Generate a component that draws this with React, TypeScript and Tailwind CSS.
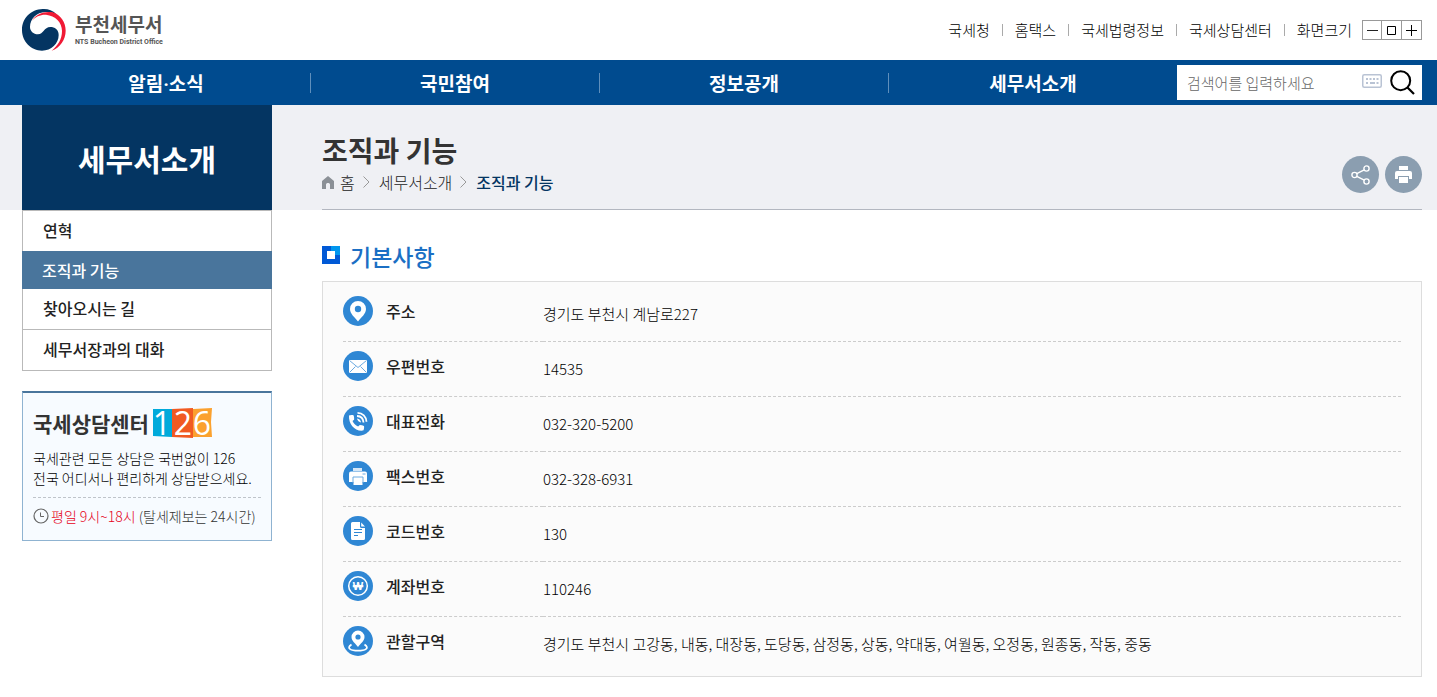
import type { ReactNode } from "react";

const utilLinks = ["국세청", "홈택스", "국세법령정보", "국세상담센터"];
const navItems = ["알림·소식", "국민참여", "정보공개", "세무서소개"];
const sideItems = ["연혁", "조직과 기능", "찾아오시는 길", "세무서장과의 대화"];
const current = "조직과 기능";

type InfoRow = {
  label: string;
  value: string;
  icon: ReactNode;
};

const infoRows: InfoRow[] = [
  { label: "주소", value: "경기도 부천시 계남로227", icon: <PinIcon /> },
  { label: "우편번호", value: "14535", icon: <MailIcon /> },
  { label: "대표전화", value: "032-320-5200", icon: <PhoneIcon /> },
  { label: "팩스번호", value: "032-328-6931", icon: <FaxIcon /> },
  { label: "코드번호", value: "130", icon: <DocIcon /> },
  { label: "계좌번호", value: "110246", icon: <WonIcon /> },
  {
    label: "관할구역",
    value: "경기도 부천시 고강동, 내동, 대장동, 도당동, 삼정동, 상동, 약대동, 여월동, 오정동, 원종동, 작동, 중동",
    icon: <AreaIcon />,
  },
];

export default function App() {
  return (
    <div className="min-h-screen bg-white font-['Noto_Sans_CJK_KR',sans-serif] text-[#222]">
      <Header />
      <MainNav />
      <div className="flex items-start gap-[50px] bg-[linear-gradient(#eff0f4_105px,transparent_105px)] pr-[15px] pb-5 pl-[22px]">
        <Sidebar />
        <main className="min-w-0 flex-1">
          <PageTitle />
          <BasicInfo />
        </main>
      </div>
    </div>
  );
}

function Header() {
  return (
    <header className="flex h-[60px] items-center justify-between pr-[15px] pl-[22px]">
      <a href="#" className="flex items-center gap-[9px]">
        <TaegeukLogo />
        <span className="flex flex-col gap-1 text-[#555]">
          <span className="text-[19px] leading-5 font-bold">부천세무서</span>
          <span className="font-[Roboto,sans-serif] text-[7px] leading-2 font-bold">NTS Bucheon District Office</span>
        </span>
      </a>
      <div className="flex items-center text-[15px] leading-5 font-light text-black">
        {utilLinks.map((link) => (
          <div key={link} className="flex items-center">
            <a href="#">{link}</a>
            <span className="mx-3 h-3 w-px bg-[#aaa]" />
          </div>
        ))}
        <span>화면크기</span>
        <div className="ml-[10px] flex divide-x divide-[#999] border border-[#999]">
          <button type="button" aria-label="축소" className="flex h-[18px] w-[19px] items-center justify-center">
            <svg width="11" height="11" viewBox="0 0 11 11" stroke="#222">
              <path d="M0 5.5h11" />
            </svg>
          </button>
          <button type="button" aria-label="기본 크기" className="flex h-[18px] w-5 items-center justify-center">
            <svg width="9" height="9" viewBox="0 0 9 9" stroke="#000" fill="none">
              <path d="M0.5 0.5h8v8h-8z" />
            </svg>
          </button>
          <button type="button" aria-label="확대" className="flex h-[18px] w-[19px] items-center justify-center">
            <svg width="11" height="11" viewBox="0 0 11 11" stroke="#000">
              <path d="M0 5.5h11M5.5 0v11" />
            </svg>
          </button>
        </div>
      </div>
    </header>
  );
}

function MainNav() {
  return (
    <div className="flex h-[45px] items-center bg-[#004b8f] pr-[15px] pl-[22px]">
      <nav className="flex flex-1 divide-x divide-[#5f8fbc]">
        {navItems.map((item) => (
          <a
            key={item}
            href="#"
            className="flex-1 pt-1 text-center font-[Roboto,'Noto_Sans_CJK_KR',sans-serif] text-[19px] leading-4 font-bold text-white"
          >
            {item}
          </a>
        ))}
      </nav>
      <form className="flex h-[35px] w-[245px] items-center bg-white pr-[7px] pl-[10px]">
        <input
          type="text"
          aria-label="검색어"
          placeholder="검색어를 입력하세요"
          className="min-w-0 flex-1 text-[15px] leading-5 font-light outline-none placeholder:text-[#666]"
        />
        <button type="button" aria-label="가상 키보드" className="mr-2 mb-1">
          <svg width="20" height="14" viewBox="0 0 20 14" fill="none">
            <rect x="0.75" y="0.75" width="18.5" height="12.5" rx="1.5" stroke="#b9c3d4" strokeWidth="1.5" />
            <path
              d="M4 5h2M7.500 5h2M11 5h2M14.500 5h2M4 9h2M8 9h5M14.500 9h2"
              stroke="#b9c3d4"
              strokeWidth="2"
            />
          </svg>
        </button>
        <button type="button" aria-label="검색">
          <svg width="25" height="25" viewBox="0 0 25 25" fill="none" stroke="#000" strokeWidth="2">
            <circle cx="10.7" cy="10.7" r="9.5" />
            <path d="M17.5 17.5l6.5 6.5" strokeWidth="2.2" />
          </svg>
        </button>
      </form>
    </div>
  );
}

function Sidebar() {
  return (
    <aside className="w-[250px] shrink-0">
      <h2 className="flex h-[105px] items-center justify-center bg-[#043562] text-[30px] leading-10 font-bold text-white">
        세무서소개
      </h2>
      <ul className="text-base leading-5 font-medium">
        {sideItems.map((item) =>
          item === current ? (
            <li key={item}>
              <a href="#" aria-current="page" className="flex h-[38px] items-center bg-[#49759c] px-5 text-white">
                {item}
              </a>
            </li>
          ) : (
            <li
              key={item}
              className="border-x border-t border-[#b9b9b9] last:border-b [li:has([aria-current])+&]:border-t-0"
            >
              <a href="#" className="flex h-10 items-center px-5 pb-[2px]">
                {item}
              </a>
            </li>
          ),
        )}
      </ul>
      <CallCenter />
    </aside>
  );
}

function CallCenter() {
  return (
    <section className="mt-5 border border-t-2 border-[#8fb3d1] border-t-[#49759c] bg-[#f7fbff] px-[10px] pt-[14px] pb-[14px]">
      <h3 className="flex items-center gap-1 text-[21px] leading-8 font-bold text-[#333]">
        국세상담센터
        <svg width="60" height="50" viewBox="0 -10 60 50" className="-my-[10px] font-['Open_Sans',sans-serif]">
          <path d="M0 1l19 0v28l-19-1z" fill="#00aadb" />
          <path d="M19 1l21 -1v30l-21-1z" fill="#f15a22" />
          <path d="M40 1l19-1-1 14 1 15h-19z" fill="#fba12f" />
          <g fill="#fff" fontSize="32" fontWeight="400" textAnchor="middle">
            <text x="9" y="27">
              1
            </text>
            <text x="30" y="27">
              2
            </text>
            <text x="49" y="27">
              6
            </text>
          </g>
        </svg>
      </h3>
      <p className="mt-[9px] text-sm leading-5 font-light whitespace-nowrap text-black">
        국세관련 모든 상담은 국번없이 126
        <br />
        전국 어디서나 편리하게 상담받으세요.
      </p>
      <p className="mt-[9px] flex items-center gap-[2px] border-t border-dashed border-[#bfc4ca] pt-2 text-sm leading-5 font-light whitespace-nowrap text-[#333]">
        <svg width="16" height="16" viewBox="0 0 16 16" fill="none" stroke="#666" className="shrink-0">
          <circle cx="8" cy="8" r="7" strokeWidth="1.2" />
          <path d="M7.5 4.5v4h3.5" />
        </svg>
        <span>
          <span className="text-[#e60020]">평일 9시~18시</span> (탈세제보는 24시간)
        </span>
      </p>
    </section>
  );
}

function PageTitle() {
  return (
    <div className="flex h-[105px] items-end justify-between border-b border-[#b3b7c0] pb-[15px]">
      <div>
        <h1 className="text-[28px] leading-10 font-bold text-[#333]">조직과 기능</h1>
        <nav className="flex items-center text-base leading-6 font-light text-[#222]">
          <svg width="12" height="13" viewBox="0 0 12 13" fill="#8b9096">
            <path d="M6 0L0 5v8h4V8.5C4 6.5 8 6.5 8 8.5V13h4V5z" />
          </svg>
          <a href="#" className="ml-[6px]">
            홈
          </a>
          <Chevron />
          <a href="#">세무서소개</a>
          <Chevron />
          <span className="font-medium text-[#043562]">{current}</span>
        </nav>
      </div>
      <div className="mb-px flex gap-[6px]">
        <button
          type="button"
          aria-label="공유"
          className="flex h-[37px] w-[37px] items-center justify-center rounded-full bg-[#8b9eb0]"
        >
          <svg width="19" height="20" viewBox="0 0 19 20" fill="none" stroke="#fff" strokeWidth="1.4">
            <circle cx="3.5" cy="10" r="2.6" />
            <circle cx="15.5" cy="3.5" r="2.6" />
            <circle cx="15.5" cy="16.5" r="2.6" />
            <path d="M5.8 8.7L13.2 4.8M5.8 11.3l7.4 3.9" />
          </svg>
        </button>
        <button
          type="button"
          aria-label="인쇄"
          className="flex h-[37px] w-[37px] items-center justify-center rounded-full bg-[#8b9eb0]"
        >
          <svg width="17" height="17" viewBox="0 0 17 17" fill="#fff">
            <path d="M4 0h9v4H4zM2 5h13a2 2 0 0 1 2 2v6h-3v-3H3v3H0V7a2 2 0 0 1 2-2zM4 11h9v6H4z" />
          </svg>
        </button>
      </div>
    </div>
  );
}

function Chevron() {
  return (
    <svg width="7" height="12" viewBox="0 0 7 12" fill="none" stroke="#999" className="mr-[9px] ml-2">
      <path d="M0.5 0.5L6 6l-5.500 5.500" />
    </svg>
  );
}

function BasicInfo() {
  return (
    <section className="pt-7">
      <h2 className="flex items-center gap-[10px] text-[23px] leading-9 font-medium text-[#1b6fc4]">
        <svg width="18" height="18" viewBox="0 0 18 18" className="mb-[2px]">
          <path d="M0 0h18v18H0z" fill="#0059d6" />
          <path d="M9 0h9v9H9z" fill="#0096ee" />
          <path d="M5 5h8v8H5z" fill="#fff" />
        </svg>
        기본사항
      </h2>
      <div className="mt-[7px] border border-[#ddd] bg-[#fbfbfb] px-5 py-[5px]">
        <table className="w-full border-collapse">
          <tbody>
            {infoRows.map((row) => (
              <tr key={row.label} className="border-b border-dashed border-[#ccc] last:border-b-0">
                <th scope="row" className="w-[200px] pt-[9px] pb-[15px] text-left text-base leading-[30px] font-medium">
                  <span className="flex items-center gap-[13px]">
                    {row.icon}
                    {row.label}
                  </span>
                </th>
                <td className="text-[15px] leading-6 font-light text-black">{row.value}</td>
              </tr>
            ))}
          </tbody>
        </table>
      </div>
    </section>
  );
}

function Badge({ children }: { children: ReactNode }) {
  return (
    <svg width="30" height="30" viewBox="0 0 30 30" fill="#fff" className="shrink-0">
      <circle cx="15" cy="15" r="15" fill="#2f87d4" />
      {children}
    </svg>
  );
}

function PinIcon() {
  return (
    <Badge>
      <path d="M15 5a8 8 0 0 0-8 8c0 5 5 8.5 8 12.5 3-4 8-7.5 8-12.5a8 8 0 0 0-8-8z" />
      <circle cx="15" cy="13" r="3.2" fill="#2f87d4" />
    </Badge>
  );
}

function MailIcon() {
  return (
    <Badge>
      <path d="M6 9h18v13H6z" />
      <path d="M6.5 9.5l8.5 7 8.5-7M6.5 21.5l6-6M23.5 21.5l-6-6" fill="none" stroke="#6dabe1" />
    </Badge>
  );
}

function PhoneIcon() {
  return (
    <Badge>
      <path d="M6 9.5c1-.7 3.5-.8 4.500-.2.600 1.200.8 3.200.6 4.400l-1.600 1.200c1.200 2.600 3 4.400 5.600 5.600l1.700-1.600c1.500 0 3 .4 4.200 1 .3 1.500 0 3.500-.8 4.700C12 25.700 5.500 18.500 6 9.500z" />
      <path
        d="M14.500 6.800c5 0 8.800 3.700 9 9M14 10c3.700.2 6.300 2.800 6.500 6.500"
        fill="none"
        stroke="#fff"
        strokeWidth="1.8"
      />
      <path d="M14 12.500c2.500.3 3.700 1.600 4 4-1.800-.2-3.600-1.800-4-4z" />
    </Badge>
  );
}

function FaxIcon() {
  return (
    <Badge>
      <path d="M10 7h9v3h-9z" opacity="0.8" />
      <path d="M8 10.500h14a2 2 0 0 1 2 2V21H6v-8.500a2 2 0 0 1 2-2z" />
      <path d="M10.500 17h9v7h-9z" />
      <path d="M19.500 13h3M10 22v-6h10v6" stroke="#6dabe1" fill="none" />
    </Badge>
  );
}

function DocIcon() {
  return (
    <Badge>
      <path d="M9.5 6H17v4.500a1.500 1.500 0 0 0 1.500 1.500H22v10.500a1.500 1.500 0 0 1-1.500 1.500h-11A1.500 1.500 0 0 1 8 22.500v-15A1.500 1.500 0 0 1 9.500 6z" />
      <path d="M18.200 6.500l3.800 4h-3.800z" />
      <path d="M11 13.500h8M11 16.500h8M11 19.500h4" stroke="#2f87d4" />
    </Badge>
  );
}

function WonIcon() {
  return (
    <Badge>
      <circle cx="15" cy="15" r="9.3" fill="none" stroke="#fff" strokeWidth="1.5" />
      <text x="15" y="19" fontSize="11" fontWeight="700" textAnchor="middle" className="font-['Liberation_Sans',sans-serif]">
        ₩
      </text>
    </Badge>
  );
}

function AreaIcon() {
  return (
    <Badge>
      <path d="M15 4.5a6.500 6.500 0 0 0-6.500 6.500c0 4 4 6.500 6.500 10 2.500-3.500 6.500-6 6.500-10A6.500 6.500 0 0 0 15 4.500z" />
      <circle cx="15" cy="11" r="2.6" fill="#2f87d4" />
      <path d="M8.500 18.500c-6 4 0 6.200 6.500 6.200s12.500-2.200 6.500-6.200" fill="none" stroke="#fff" strokeWidth="1.7" />
    </Badge>
  );
}

function TaegeukLogo() {
  return (
    <svg width="44" height="42" viewBox="0 0 132 126">
      <path
        d="M66 0C28-1 0 27 0 63c0 35 28 62 60 62 28 0 50-21 50-47 0-16-12-24-25-24-19 0-21 22-37 22-14 0-24-10-24-22C24 30 44 10 70 9c10 0 22 2 33 6C92 5 80 0 66 0z"
        fill="#043562"
      />
      <path
        d="M30 35C42 16 66 6 92 10c24 7 39 30 39 55 0 27-17 51-42 60 19-15 31-35 31-59 0-26-20-46-48-49-16-1-32 6-42 18z"
        fill="#f01a35"
      />
    </svg>
  );
}
